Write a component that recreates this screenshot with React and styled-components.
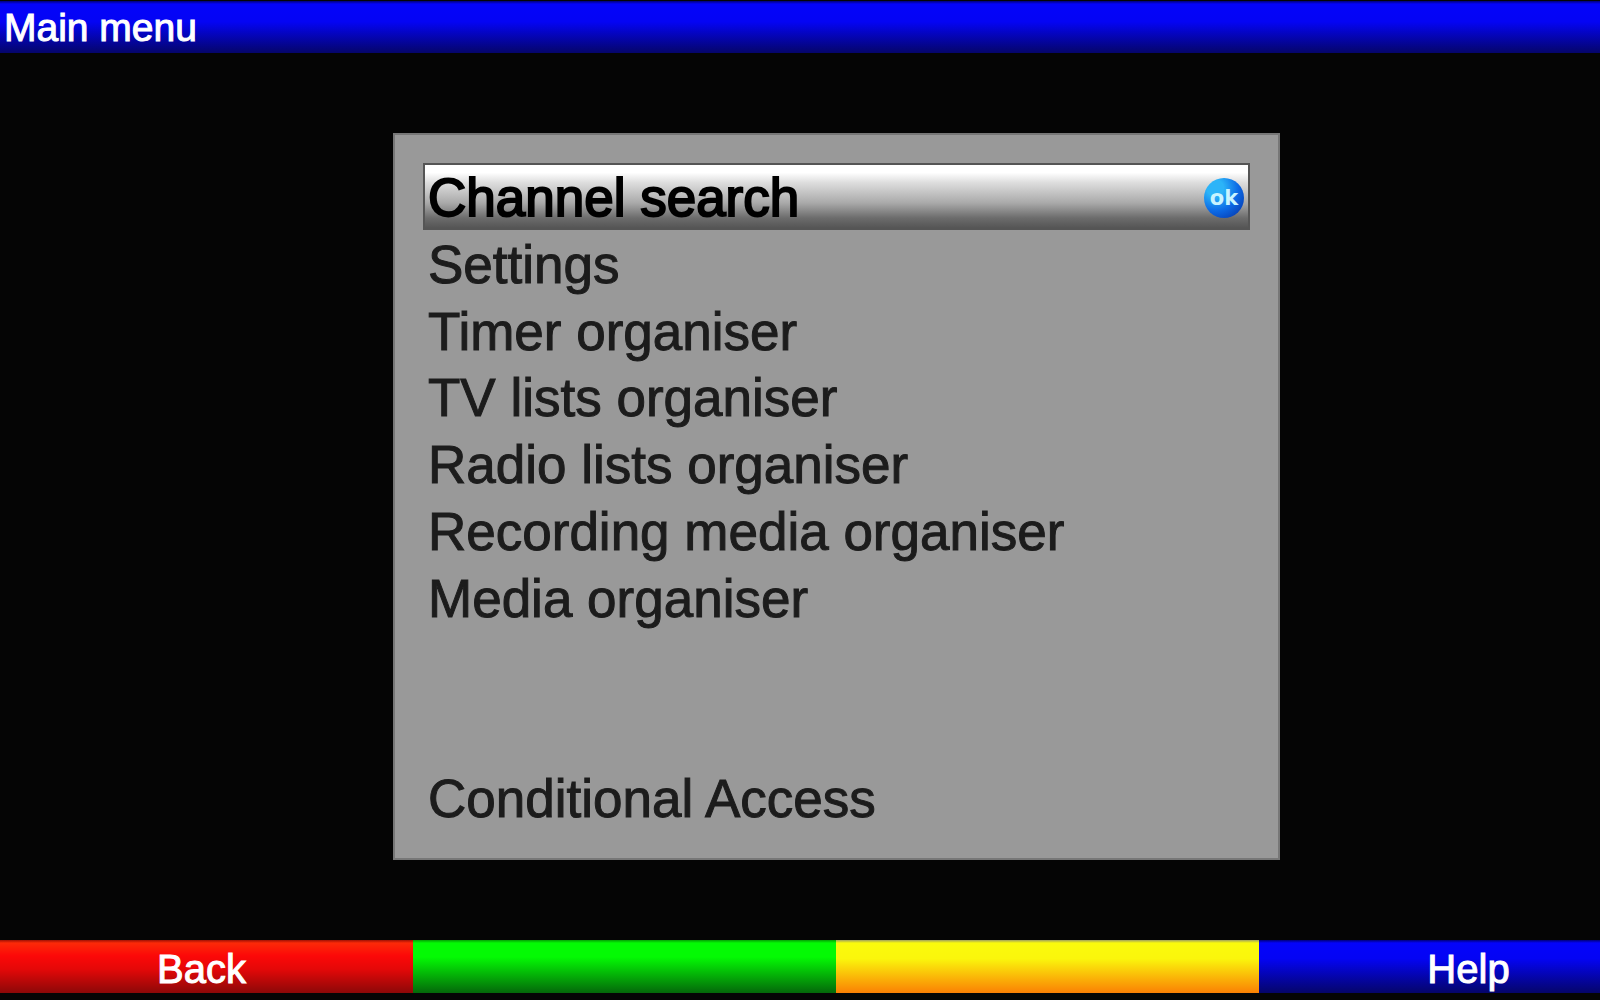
import { useState } from "react";
import styled, { createGlobalStyle } from "styled-components";

const GlobalStyle = createGlobalStyle`
  * {
    box-sizing: border-box;
  }

  body {
    margin: 0;
    background: #050505;
    font-family: "Liberation Sans", Arial, sans-serif;
  }

  button {
    font-family: inherit;
    cursor: pointer;
  }
`;

const Screen = styled.div`
  display: flex;
  flex-direction: column;
  min-height: 100vh;
  padding: 1px 0 7px;
`;

const Header = styled.header`
  display: flex;
  align-items: center;
  height: 52px;
  padding: 2px 0 0 4px;
  background: linear-gradient(#00007a, #0404fa 3px, #0404f4 40%, #05056a);
`;

const Title = styled.h1`
  margin: 0;
  font-size: 39px;
  line-height: 48px;
  font-weight: 400;
  color: #fff;
  -webkit-text-stroke: 1px #fff;
`;

const Main = styled.main`
  flex: 1;
  display: grid;
  grid-template-columns: 393fr 887fr 320fr;
  padding: 80px 0;
`;

const Panel = styled.nav`
  grid-column: 2;
  display: grid;
  padding: 28px;
  background: #999;
  border: 2px solid #777;
`;

const MenuList = styled.ul`
  display: grid;
  grid-template-rows: repeat(10, 1fr);
  margin: 0;
  padding: 0;
  list-style: none;
`;

const MenuRow = styled.li`
  display: grid;
  grid-row: ${(props) => props.$row};
`;

const MenuButton = styled.button`
  display: flex;
  align-items: center;
  justify-content: space-between;
  padding: 4px 4px 0 3px;
  border: 2px solid ${(props) => (props.$active ? "#555" : "transparent")};
  outline: none;
  background: ${(props) =>
    props.$active
      ? "linear-gradient(#fff 12%, #ddd 28%, #aaa 60%, #6c6c6c 84%, #555)"
      : "none"};
  color: ${(props) => (props.$active ? "#000" : "#1c1c1c")};
  -webkit-text-stroke: ${(props) => (props.$active ? "2px" : "1px")};
  font-size: 53px;
  line-height: 58px;
  text-align: left;
`;

const OkBadge = styled.span`
  display: flex;
  align-items: center;
  justify-content: center;
  width: 40px;
  height: 40px;
  border-radius: 50%;
  background: radial-gradient(
    circle at 28% 25%,
    #2cb4f8 20%,
    #0c6ae6 55%,
    #042a9c
  );
  color: #c8f4ff;
  font-family: "DejaVu Sans", sans-serif;
  font-size: 21px;
  font-weight: 700;
  line-height: 24px;
  -webkit-text-stroke: 0;
`;

const ColourBar = styled.footer`
  display: grid;
  grid-template-columns: 413fr 423fr 423fr 341fr;
  height: 53px;
`;

const ColourKey = styled.button`
  padding: ${(props) => props.$padding || "0"};
  border: none;
  background: linear-gradient(${(props) => props.$shades});
  color: #fff;
  font-size: 40px;
  line-height: 48px;
  -webkit-text-stroke: 1px #fff;
`;

const menuItems = [
  { label: "Channel search", row: 1 },
  { label: "Settings", row: 2 },
  { label: "Timer organiser", row: 3 },
  { label: "TV lists organiser", row: 4 },
  { label: "Radio lists organiser", row: 5 },
  { label: "Recording media organiser", row: 6 },
  { label: "Media organiser", row: 7 },
  { label: "Conditional Access", row: 10 },
];

export default function App() {
  const [active, setActive] = useState("Channel search");

  return (
    <>
      <GlobalStyle />
      <Screen>
        <Header>
          <Title>Main menu</Title>
        </Header>

        <Main>
          <Panel>
            <MenuList>
              {menuItems.map((item) => (
                <MenuRow key={item.label} $row={item.row}>
                  <MenuButton
                    type="button"
                    $active={active === item.label}
                    onClick={() => setActive(item.label)}
                  >
                    <span>{item.label}</span>
                    {active === item.label && <OkBadge>ok</OkBadge>}
                  </MenuButton>
                </MenuRow>
              ))}
            </MenuList>
          </Panel>
        </Main>

        <ColourBar>
          <ColourKey
            type="button"
            $shades="#a01004, #fc2a08 3px, #fc0808 30%, #e40808 55%, #8c0808"
            $padding="4px 10px 0 0"
          >
            Back
          </ColourKey>
          <ColourKey
            type="button"
            aria-label="Green"
            $shades="#04a004, #04fa04 3px, #04fa04 32%, #04680a"
          />
          <ColourKey
            type="button"
            aria-label="Yellow"
            $shades="#a0a060, #fafa0c 3px, #faf60c 35%, #fa8004"
          />
          <ColourKey
            type="button"
            $shades="#00007a, #0404fa 3px, #0404f4 35%, #05056a"
            $padding="4px 0 0 78px"
          >
            Help
          </ColourKey>
        </ColourBar>
      </Screen>
    </>
  );
}
